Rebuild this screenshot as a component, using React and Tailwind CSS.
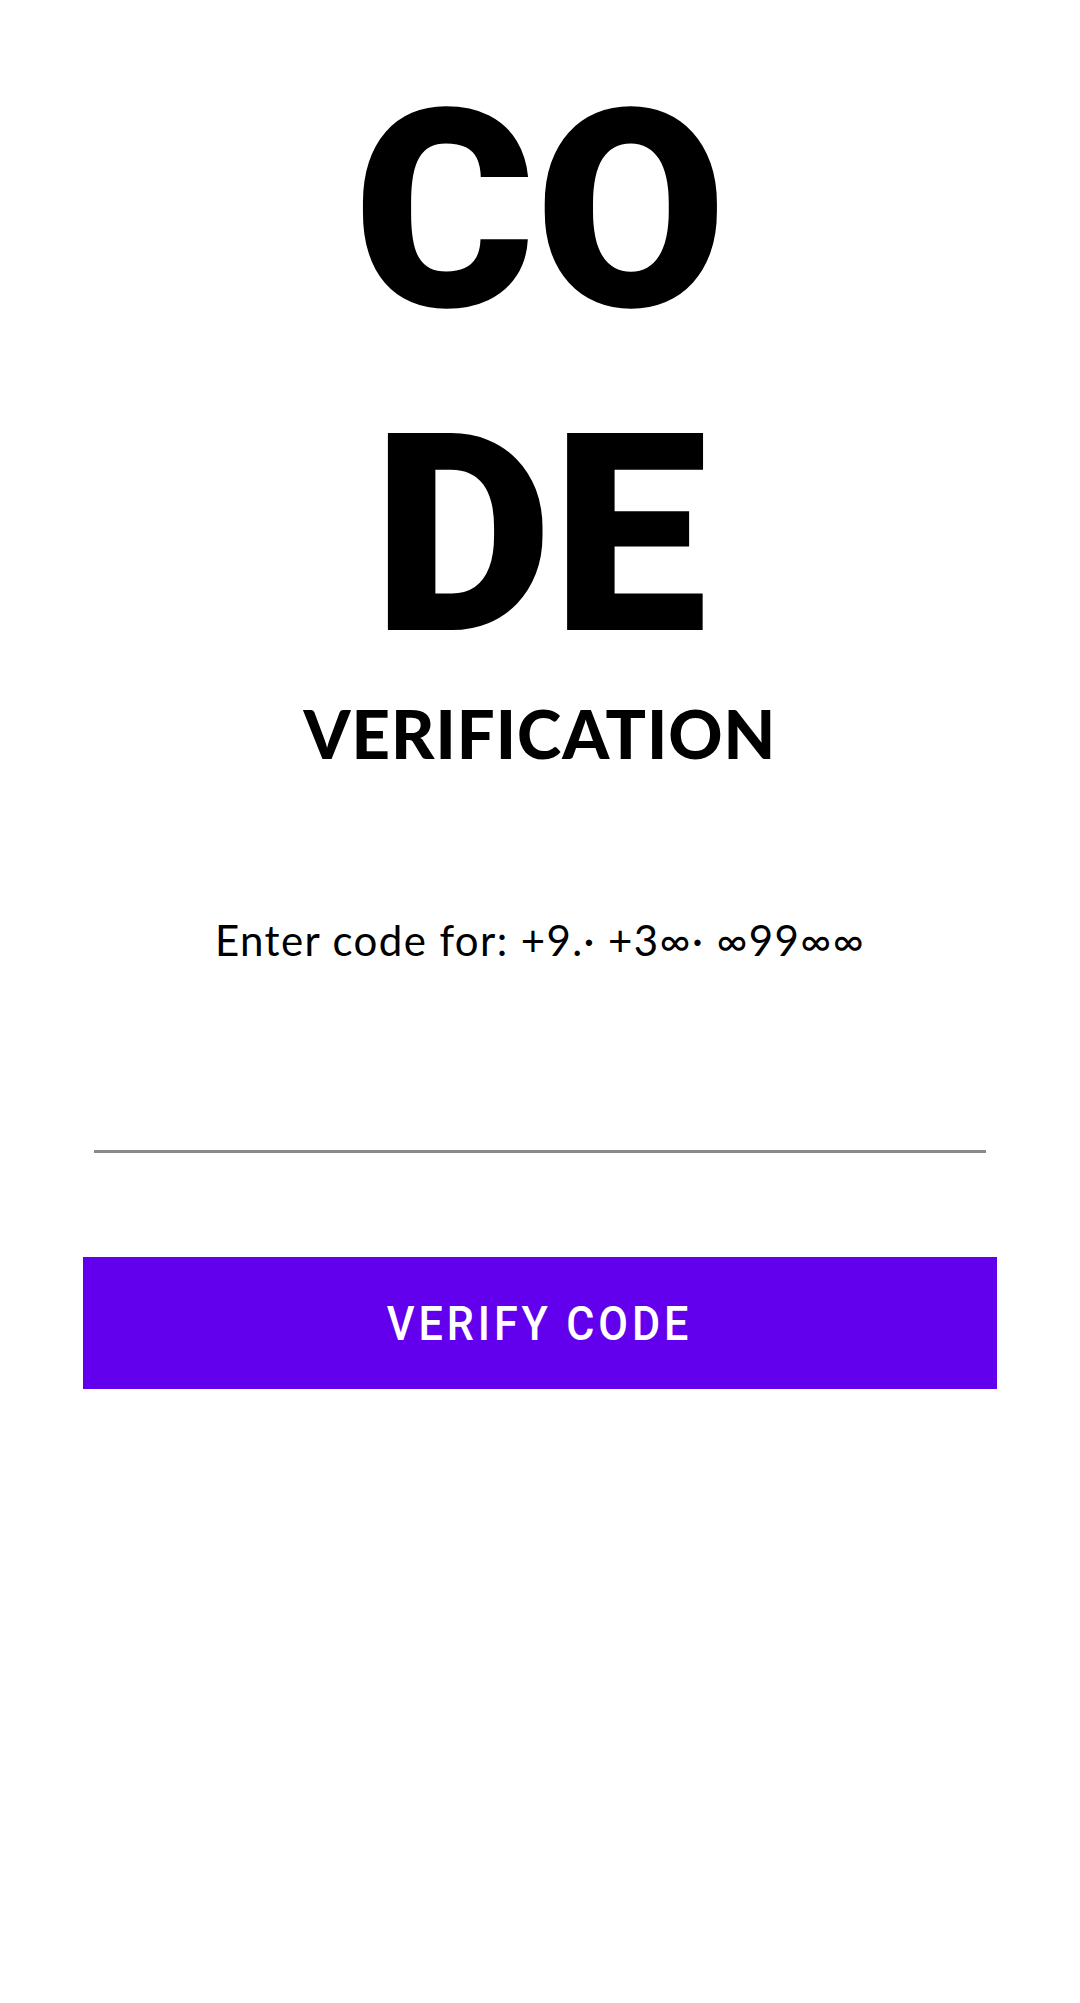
export default function App() {
  return (
    <div className="min-h-[2003px] w-full bg-white flex flex-col items-center text-black">
      <h1 className="mt-[50px] w-[440px] break-all text-center font-['Roboto'] font-black text-[277px] leading-[324px]">
        CODE
      </h1>
      <h2 className="-mt-[4px] font-['Lato'] font-black text-[67px] leading-[79px] tracking-[1px] text-center">
        VERIFICATION
      </h2>
      <p className="mt-[142px] font-['Lato'] text-[42px] leading-[50px] tracking-[1.4px] text-center whitespace-nowrap">
        Enter code for: +9.· +3∞· ∞99∞∞
      </p>
      <div className="w-[892px] h-[188px] border-b-[3px] border-[#8a8a8a]" />
      <button className="mt-[104px] w-[914px] h-[132px] bg-[#6200EE] flex items-center justify-center">
        <span className="inline-block scale-x-[0.88] font-['Roboto'] font-medium text-[49px] leading-none tracking-[0.09em] text-white">
          VERIFY CODE
        </span>
      </button>
    </div>
  );
}
